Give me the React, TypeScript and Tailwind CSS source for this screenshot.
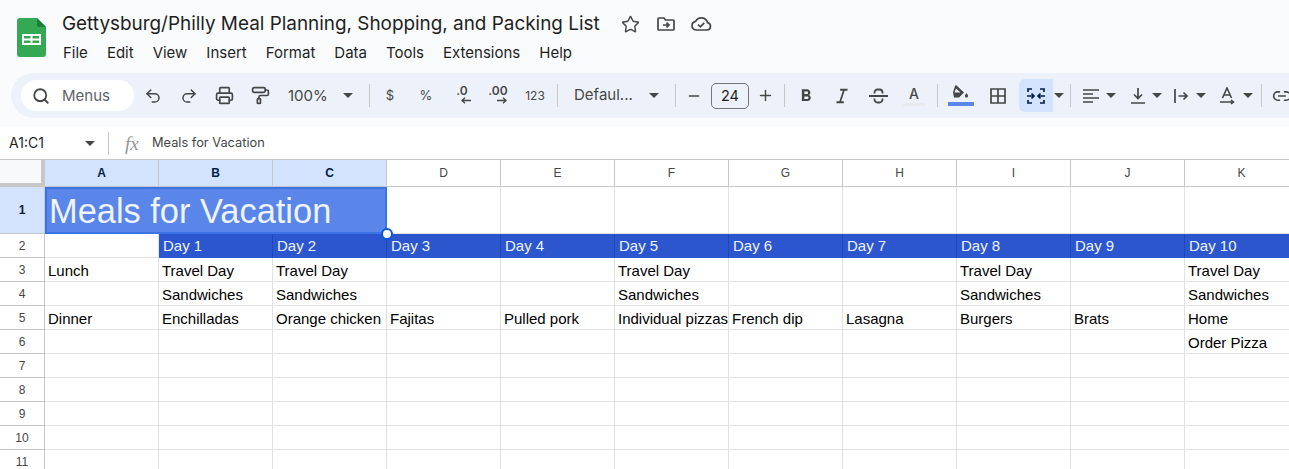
import { Search, Undo2, Redo2, Printer, PaintRoller, Star, Minus, Plus, Link2 } from "lucide-react";

const columns = ["A", "B", "C", "D", "E", "F", "G", "H", "I", "J", "K"];
const selected = ["A", "B", "C"];
const days = ["Day 1", "Day 2", "Day 3", "Day 4", "Day 5", "Day 6", "Day 7", "Day 8", "Day 9", "Day 10"];

const rows: Record<number, Record<string, string>> = {
  3: { A: "Lunch", B: "Travel Day", C: "Travel Day", F: "Travel Day", I: "Travel Day", K: "Travel Day" },
  4: { B: "Sandwiches", C: "Sandwiches", F: "Sandwiches", I: "Sandwiches", K: "Sandwiches" },
  5: { A: "Dinner", B: "Enchilladas", C: "Orange chicken", D: "Fajitas", E: "Pulled pork", F: "Individual pizzas", G: "French dip", H: "Lasagna", I: "Burgers", J: "Brats", K: "Home" },
  6: { K: "Order Pizza" },
  7: {},
  8: {},
  9: {},
  10: {},
  11: {},
};

function Caret({ className = "" }: { className?: string }) {
  return <span className={`w-0 h-0 border-x-[5px] border-x-transparent border-t-[5px] border-t-[#444746] ${className}`} />;
}

function Sep({ className = "" }: { className?: string }) {
  return <span className={`w-px h-[23px] bg-[#c7c7c7] shrink-0 ${className}`} />;
}

function Tool({ children, w = "w-[36px]" }: { children: React.ReactNode; w?: string }) {
  return <span className={`${w} h-full shrink-0 flex items-center justify-center text-[#444746]`}>{children}</span>;
}

export default function App() {
  return (
    <div className="w-[1289px] h-[469px] overflow-hidden bg-white font-['Liberation_Sans',sans-serif]">
      <div className="bg-[#f9fbfd] h-[127px] flex flex-col">
        <div className="flex h-[73px]">
          <svg width="30" height="40" viewBox="0 0 30 40" className="ml-[17px] mt-[18px] shrink-0">
            <path d="M3 0H20L29 9V36a3 3 0 0 1-3 3H3a3 3 0 0 1-3-3V3a3 3 0 0 1 3-3z" fill="#34a853" />
            <path d="M20 0L29 9H22a2 2 0 0 1-2-2z" fill="#188038" />
            <path d="M5 16H24V27H5zM7 18V20.5H13.5V18zM15.5 18V20.5H22V18zM7 22.5V25H13.5V22.5zM15.5 22.5V25H22V22.5z" fill="#fff" fillRule="evenodd" />
          </svg>
          <div className="ml-[15px] font-['Inter',sans-serif]">
            <div className="flex items-center h-[24px] mt-[12px]">
              <span className="text-[18.9px] text-[#1f1f1f] whitespace-nowrap w-[539px]">Gettysburg/Philly Meal Planning, Shopping, and Packing List</span>
              <Star size={19} strokeWidth={1.8} className="ml-[20px] text-[#444746]" />
              <svg width="20" height="20" viewBox="0 0 20 20" className="ml-[16px]" fill="none" stroke="#444746" strokeWidth="1.7">
                <path d="M2 5.5V15.2a.8.8 0 0 0 .8.8H17.2a.8.8 0 0 0 .8-.8V6.8a.8.8 0 0 0-.8-.8H9.5L8 4H2.8a.8.8 0 0 0-.8.8z" />
                <path d="M7 11H12.5M10.5 8.7L13 11L10.5 13.3" />
              </svg>
              <svg width="22" height="20" viewBox="0 0 22 20" className="ml-[14px]" fill="none" stroke="#444746" strokeWidth="1.7">
                <path d="M6 16H17a3.7 3.7 0 0 0 .6-7.3A6.5 6.5 0 0 0 5.6 7.3 4.4 4.4 0 0 0 6 16z" />
                <path d="M8 10.5L10.3 12.8L14.3 8.8" />
              </svg>
            </div>
            <div className="flex gap-[19px] text-[15px] text-[#1f1f1f] mt-[5px] h-[24px] items-center ml-[1px]">
              <span>File</span>
              <span>Edit</span>
              <span>View</span>
              <span>Insert</span>
              <span>Format</span>
              <span>Data</span>
              <span>Tools</span>
              <span>Extensions</span>
              <span>Help</span>
            </div>
          </div>
        </div>
        <div className="ml-[11px] h-[45px] w-[1278px] shrink-0 bg-[#edf2fa] rounded-l-[23px] flex items-center overflow-hidden pl-[10px] font-['Inter',sans-serif] text-[#444746]">
          <div className="w-[113px] h-[31px] bg-white rounded-full flex items-center shrink-0 pl-[11px]">
            <Search size={18} strokeWidth={2.4} className="text-[#444746]" />
            <span className="ml-[12px] text-[15px] text-[#5f6368] pt-[1px]">Menus</span>
          </div>
          <span className="w-[1px] shrink-0" />
          <Tool><Undo2 size={18} strokeWidth={2} /></Tool>
          <Tool><Redo2 size={18} strokeWidth={2} /></Tool>
          <Tool w="w-[35px]"><Printer size={19} strokeWidth={2.1} /></Tool>
          <Tool><PaintRoller size={19} strokeWidth={2.1} /></Tool>
          <span className="w-[83px] shrink-0 flex items-center pl-[10px] text-[15px]">
            <span className="pt-[1px]">100%</span>
            <Caret className="ml-[15px]" />
          </span>
          <Sep className="ml-[8px] mr-[2px]" />
          <Tool><span className="text-[13px]">$</span></Tool>
          <Tool><span className="text-[13px]">%</span></Tool>
          <Tool>
            <span className="flex flex-col items-center text-[12px] font-semibold -mt-[3px] h-[20px]">
              <span className="leading-[13px]">.0</span>
              <svg width="10" height="7" viewBox="0 0 10 7" fill="none" stroke="#444746" strokeWidth="1.4" className="ml-[8px]">
                <path d="M10 3.5H1M4 .8L1 3.5L4 6.2" />
              </svg>
            </span>
          </Tool>
          <Tool>
            <span className="flex flex-col items-center text-[12px] font-semibold -mt-[3px] h-[20px]">
              <span className="leading-[13px]">.00</span>
              <svg width="10" height="7" viewBox="0 0 10 7" fill="none" stroke="#444746" strokeWidth="1.4" className="ml-[8px]">
                <path d="M0 3.5H9M6 .8L9 3.5L6 6.2" />
              </svg>
            </span>
          </Tool>
          <Tool w="w-[38px]"><span className="text-[12px]">123</span></Tool>
          <Sep className="ml-[3px]" />
          <span className="ml-[16px] w-[88px] shrink-0 flex items-center text-[15px]">
            Defaul...
            <Caret className="ml-[16px]" />
          </span>
          <Sep className="ml-[13px]" />
          <Tool w="w-[35px]"><Minus size={16} strokeWidth={2} /></Tool>
          <span className="w-[38px] h-[26px] shrink-0 rounded-[5px] border border-[#747775] flex items-center justify-center text-[14.5px] text-[#1f1f1f]">24</span>
          <Tool w="w-[32px]"><Plus size={17} strokeWidth={2} /></Tool>
          <Sep className="ml-[3px]" />
          <span className="w-[3px] shrink-0" />
          <Tool>
            <svg width="20" height="20" viewBox="0 0 24 24" fill="#444746">
              <path d="M15.6 10.79c.97-.67 1.65-1.77 1.65-2.79 0-2.26-1.75-4-4-4H7v14h7.04c2.09 0 3.71-1.7 3.71-3.79 0-1.52-.86-2.82-2.15-3.42zM10 6.5h3c.83 0 1.5.67 1.5 1.5s-.67 1.5-1.5 1.5h-3v-3zm3.5 9H10v-3h3.5c.83 0 1.5.67 1.5 1.5s-.67 1.5-1.5 1.5z" />
            </svg>
          </Tool>
          <Tool>
            <svg width="22" height="22" viewBox="0 0 24 24" fill="#444746">
              <path d="M10 4v2.4h2.9l-3.8 11.2H6V20h8v-2.4h-2.9l3.8-11.2H18V4z" />
            </svg>
          </Tool>
          <Tool>
            <svg width="19" height="18" viewBox="0 0 19 18" fill="none" stroke="#444746" strokeWidth="1.8">
              <path d="M0 9H19M5.5 6.5V5.5A3 3 0 0 1 8.5 2.5H10.5A3 3 0 0 1 13.5 5.5V6.5M5.5 11.5V12.5A3 3 0 0 0 8.5 15.5H10.5A3 3 0 0 0 13.5 12.5V11.5" />
            </svg>
          </Tool>
          <Tool>
            <span className="flex flex-col items-center text-[14px] leading-[15px] font-medium">
              A
              <span className="w-[22px] h-[3px] mt-[2px] bg-[#e8eaed]" />
            </span>
          </Tool>
          <Sep className="ml-[5px]" />
          <Tool w="w-[45px]">
            <svg width="26" height="24" viewBox="0 0 26 24">
              <path d="M7 2L8 1L16 8.5L11 13.5L6 13.5L5 8.5Z M8 4.5L12.5 8.5H6.5Z" fill="#444746" fillRule="evenodd" />
              <path d="M18.5 9c1 1.5 1.6 2.2 1.6 3a1.6 1.6 0 0 1-3.2 0c0-.8.6-1.5 1.6-3z" fill="#444746" />
              <rect x="0" y="18" width="26" height="4" fill="#5986e8" />
            </svg>
          </Tool>
          <Tool w="w-[30px]">
            <svg width="16" height="16" viewBox="0 0 16 16" fill="none" stroke="#444746" strokeWidth="1.7">
              <path d="M1 1H15V15H1zM8 1V15M1 8H15" />
            </svg>
          </Tool>
          <span className="w-[34px] h-[33px] ml-[6px] shrink-0 bg-[#d3e3fd] rounded-l-[6px] flex items-center justify-center">
            <svg width="18" height="16" viewBox="0 0 18 16" fill="none" stroke="#041e49" strokeWidth="1.7">
              <path d="M5 1H1V4M13 1H17V4M5 15H1V12M13 15H17V12M0 8H7M4.5 5.5L7 8L4.5 10.5M18 8H11M13.5 5.5L11 8L13.5 10.5" />
            </svg>
          </span>
          <Caret className="ml-[1px]" />
          <Sep className="ml-[6px]" />
          <Tool w="w-[40px]">
            <svg width="16" height="14" viewBox="0 0 16 14" stroke="#444746" strokeWidth="1.6">
              <path d="M0 1H16M0 5H10M0 9H16M0 13H10" />
            </svg>
          </Tool>
          <Caret className="-ml-[5px]" />
          <Tool w="w-[43px]">
            <svg width="16" height="16" viewBox="0 0 16 16" fill="none" stroke="#444746" strokeWidth="1.7">
              <path d="M8 0V10M4 6.5L8 10.5L12 6.5M1 15H15" />
            </svg>
          </Tool>
          <Caret className="-ml-[7px]" />
          <Tool w="w-[37px]">
            <svg width="16" height="16" viewBox="0 0 16 16" fill="none" stroke="#444746" strokeWidth="1.7">
              <path d="M2 1V15M5.5 8H14M10.5 4.5L14 8L10.5 11.5" />
            </svg>
          </Tool>
          <Caret className="-ml-[3px]" />
          <Tool w="w-[41px]">
            <svg width="16" height="18" viewBox="0 0 16 18" fill="none" stroke="#444746" strokeWidth="1.6">
              <path d="M3.5 11L8 1L12.5 11M5 8H11M1 15H14M12 13L14.5 15L12 17" />
            </svg>
          </Tool>
          <Caret className="-ml-[4px]" />
          <Sep className="ml-[8px]" />
          <Tool w="w-[40px]"><Link2 size={20} strokeWidth={1.9} /></Tool>
        </div>
        <div className="h-[9px]" />
      </div>
      <div className="h-[33px] border-b border-[#c7c7c7] bg-white flex items-center font-['Inter',sans-serif]">
        <span className="w-[85px] pl-[9px] text-[14px] text-[#1f1f1f] leading-none">A1:C1</span>
        <Caret />
        <Sep className="ml-[13px] h-[19px]" />
        <span className="ml-[16px] w-[18px] text-[19px] italic text-[#8f9498] font-['Liberation_Serif',serif] leading-none">fx</span>
        <span className="ml-[9px] text-[12.8px] text-[#444746]">Meals for Vacation</span>
      </div>
      <div className="relative grid grid-cols-[45px_repeat(11,114px)] grid-rows-[27px_47px_24px_repeat(9,24px)] text-[15px] text-black">
        <div className="relative bg-[#f8f9fa] border-r-[4px] border-b-[4px] border-[#c7c7c7]" />
        {columns.map((c) => (
          <div
            key={c}
            className={`border-r border-b border-[#c7c7c7] flex items-center justify-center text-[12px] ${selected.includes(c) ? "bg-[#d3e3fd] font-bold text-[#041e49]" : "text-[#444746]"}`}
          >
            {c}
          </div>
        ))}

        <div className="bg-[#d3e3fd] border-r border-b border-[#c7c7c7] flex items-center justify-center text-[12px] font-bold text-[#041e49]">1</div>
        <div className="col-span-3 bg-[#5986e8] border-2 border-[#3b73e6] flex items-center pl-[2px] pt-[2px] text-[34.4px] text-[#eef3fd] leading-none whitespace-nowrap">Meals for Vacation</div>
        {columns.slice(3).map((c) => (
          <div key={c} className="border-r border-b border-[#e1e1e1]" />
        ))}

        <div className="border-r border-b border-[#c7c7c7] flex items-center justify-center text-[12px] text-[#444746]">2</div>
        <div className="border-r border-b border-[#e1e1e1]" />
        {days.map((d) => (
          <div key={d} className="bg-[#2b56ce] border-r border-[#2148b8] flex items-center pl-[4px] text-[#f1f4fc] whitespace-nowrap">{d}</div>
        ))}

        {Object.entries(rows).map(([n, cells]) => (
          <div key={n} className="contents">
            <div className="border-r border-b border-[#c7c7c7] flex items-center justify-center text-[12px] text-[#444746]">{n}</div>
            {columns.map((c) => (
              <div key={c} className="border-r border-b border-[#e1e1e1] flex items-center pt-[4px] pl-[3px] whitespace-nowrap overflow-hidden">
                {cells[c]}
              </div>
            ))}
          </div>
        ))}

        <span className="absolute left-[381px] top-[68px] w-[12px] h-[12px] rounded-full bg-white border-2 border-[#0b57d0]" />
      </div>
    </div>
  );
}
